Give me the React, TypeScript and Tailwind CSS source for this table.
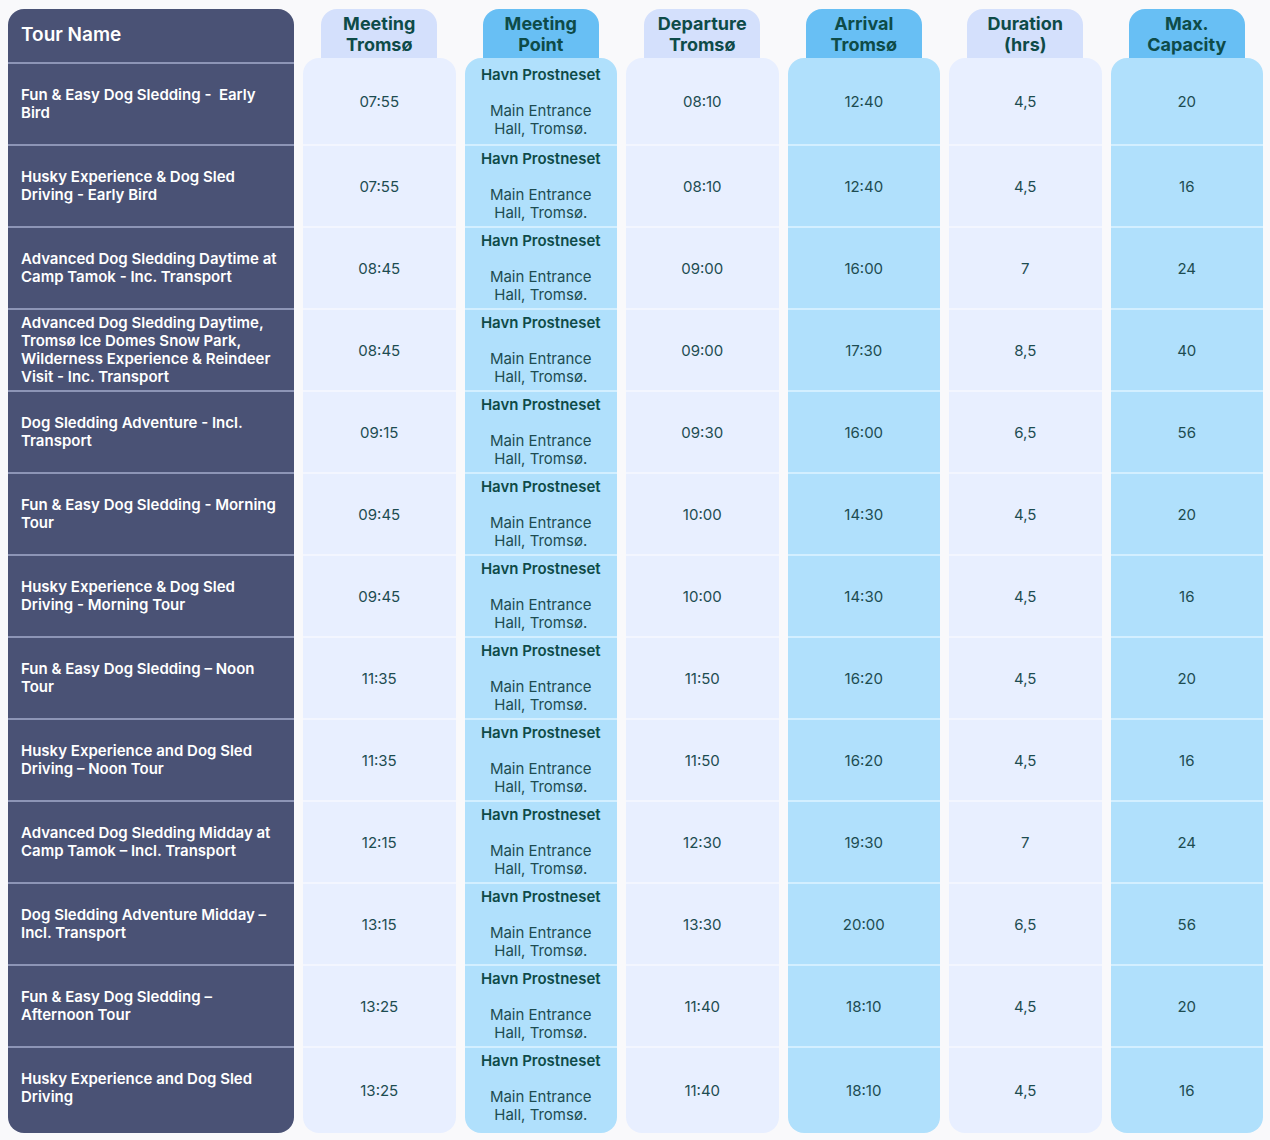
import React from 'react';

type Tour = {
  name: string[];
  meeting: string;
  departure: string;
  arrival: string;
  duration: string;
  capacity: string;
};

const tours: Tour[] = [
  { name: ['Fun & Easy Dog Sledding -  Early', 'Bird'], meeting: '07:55', departure: '08:10', arrival: '12:40', duration: '4,5', capacity: '20' },
  { name: ['Husky Experience & Dog Sled', 'Driving - Early Bird'], meeting: '07:55', departure: '08:10', arrival: '12:40', duration: '4,5', capacity: '16' },
  { name: ['Advanced Dog Sledding Daytime at', 'Camp Tamok - Inc. Transport'], meeting: '08:45', departure: '09:00', arrival: '16:00', duration: '7', capacity: '24' },
  { name: ['Advanced Dog Sledding Daytime,', 'Tromsø Ice Domes Snow Park,', 'Wilderness Experience & Reindeer', 'Visit - Inc. Transport'], meeting: '08:45', departure: '09:00', arrival: '17:30', duration: '8,5', capacity: '40' },
  { name: ['Dog Sledding Adventure - Incl.', 'Transport'], meeting: '09:15', departure: '09:30', arrival: '16:00', duration: '6,5', capacity: '56' },
  { name: ['Fun & Easy Dog Sledding - Morning', 'Tour'], meeting: '09:45', departure: '10:00', arrival: '14:30', duration: '4,5', capacity: '20' },
  { name: ['Husky Experience & Dog Sled', 'Driving - Morning Tour'], meeting: '09:45', departure: '10:00', arrival: '14:30', duration: '4,5', capacity: '16' },
  { name: ['Fun & Easy Dog Sledding – Noon', 'Tour'], meeting: '11:35', departure: '11:50', arrival: '16:20', duration: '4,5', capacity: '20' },
  { name: ['Husky Experience and Dog Sled', 'Driving – Noon Tour'], meeting: '11:35', departure: '11:50', arrival: '16:20', duration: '4,5', capacity: '16' },
  { name: ['Advanced Dog Sledding Midday at', 'Camp Tamok – Incl. Transport'], meeting: '12:15', departure: '12:30', arrival: '19:30', duration: '7', capacity: '24' },
  { name: ['Dog Sledding Adventure Midday –', 'Incl. Transport'], meeting: '13:15', departure: '13:30', arrival: '20:00', duration: '6,5', capacity: '56' },
  { name: ['Fun & Easy Dog Sledding –', 'Afternoon Tour'], meeting: '13:25', departure: '11:40', arrival: '18:10', duration: '4,5', capacity: '20' },
  { name: ['Husky Experience and Dog Sled', 'Driving'], meeting: '13:25', departure: '11:40', arrival: '18:10', duration: '4,5', capacity: '16' },
];

const last = tours.length - 1;

// first data row is taller (sits under the rounded top), last one carries the bottom padding
const rowHeight = (i: number) =>
  i === 0 ? 'h-[86px]' : i === last ? 'h-[87px] border-t-2' : 'h-[82px] border-t-2';

interface ColumnProps {
  title: string[];
  blue?: boolean;
  render: (t: Tour, i: number) => React.ReactNode;
}

const Column: React.FC<ColumnProps> = ({ title, blue = false, render }) => (
  <div className="flex-1 flex flex-col items-center">
    <div
      className={`w-[116px] h-[49px] pt-[1px] rounded-t-2xl flex flex-col items-center justify-center text-[18px] font-bold leading-[21px] text-[#0e4b48] ${
        blue ? 'bg-[#68bff4]' : 'bg-[#d4e0fc]'
      }`}
    >
      {title.map((l) => (
        <span key={l}>{l}</span>
      ))}
    </div>
    <div className={`w-full rounded-2xl overflow-hidden ${blue ? 'bg-[#b0e0fc]' : 'bg-[#e8efff]'}`}>
      {tours.map((t, i) => (
        <div key={i} className={`${rowHeight(i)} ${blue ? 'border-[#d3efff]' : 'border-[#f3f6ff]'}`}>
          {render(t, i)}
        </div>
      ))}
    </div>
  </div>
);

const Value = ({ v, i }: { v: string; i: number }) => (
  <div
    className={`h-full flex items-center justify-center text-[15px] text-[#1d4c51] ${
      i === last ? 'pt-[1px]' : 'pt-[3px]'
    }`}
  >
    {v}
  </div>
);

export default function App() {
  return (
    <div
      className="min-h-screen w-[1270px] bg-[#f9f9fb] pt-[9px] pl-[8px] pr-[7px] pb-[7px] flex gap-[9px]"
      style={{ fontFamily: 'Inter, "Noto Sans", sans-serif' }}
    >
      {/* tour names */}
      <div className="w-[286px] shrink-0 rounded-2xl bg-[#4a5275] overflow-hidden">
        <div className="h-[53px] flex items-center pl-[13px] text-[19px] font-semibold text-white">Tour Name</div>
        {tours.map((t, i) => (
          <div
            key={i}
            className={`${i === last ? 'h-[87px] pb-[5px]' : 'h-[82px]'} border-t-2 border-[#8d95b6] flex flex-col justify-center pl-[13px] pr-2 text-[15px] font-semibold leading-[18px] text-white`}
          >
            {t.name.map((l, k) => (
              <span key={k} className="whitespace-pre">{l}</span>
            ))}
          </div>
        ))}
      </div>

      <Column title={['Meeting', 'Tromsø']} render={(t, i) => <Value v={t.meeting} i={i} />} />
      <Column
        blue
        title={['Meeting', 'Point']}
        render={(_, i) => (
          <div className={`flex flex-col items-center text-[15px] leading-[18px] text-[#1d4c51] ${i === 0 ? 'pt-[8px]' : 'pt-[4px]'}`}>
            <span className="font-semibold text-[#0e4b48]">Havn Prostneset</span>
            <span className="mt-[18px]">Main Entrance</span>
            <span>Hall, Tromsø.</span>
          </div>
        )}
      />
      <Column title={['Departure', 'Tromsø']} render={(t, i) => <Value v={t.departure} i={i} />} />
      <Column blue title={['Arrival', 'Tromsø']} render={(t, i) => <Value v={t.arrival} i={i} />} />
      <Column title={['Duration', '(hrs)']} render={(t, i) => <Value v={t.duration} i={i} />} />
      <Column blue title={['Max.', 'Capacity']} render={(t, i) => <Value v={t.capacity} i={i} />} />
    </div>
  );
}
